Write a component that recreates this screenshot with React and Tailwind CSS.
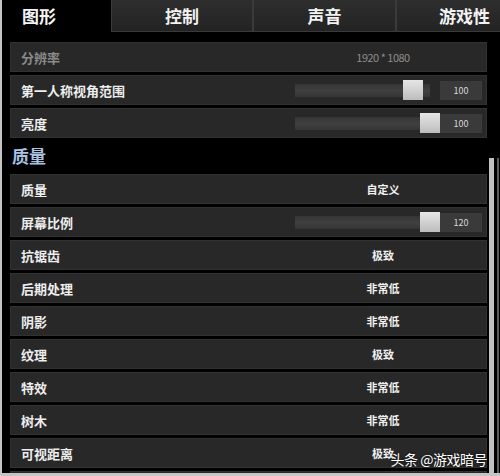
import React from "react";

const FONT = { fontFamily: '"Noto Sans CJK SC", "Noto Sans", sans-serif' };

function Tab({ label, className }) {
  return (
    <div
      className={`flex h-[32px] shrink-0 items-center justify-center border border-t-0 border-[#3a3a3a] bg-gradient-to-b from-[#2e2e2e] to-[#232323] text-[17px] font-bold text-[#f2f2f2] ${className}`}
    >
      {label}
    </div>
  );
}

function Row({ label, dim, children }) {
  return (
    <div className="flex h-[30px] w-[477px] shrink-0 items-center border border-[#323232] bg-[#282828]">
      <div
        className={`flex-1 pl-[10px] text-[13px] font-bold leading-none ${
          dim ? "text-[#8a8a8a]" : "text-[#ededed]"
        }`}
      >
        {label}
      </div>
      <div className="flex h-full w-[191px] items-center">{children}</div>
    </div>
  );
}

function TextValue({ children, dim }) {
  return (
    <div
      className={`w-[176px] text-center leading-none ${
        dim ? "text-[11px] font-normal tracking-[-0.5px] text-[#8c8c8c]" : "text-[11px] font-bold text-[#f0f0f0]"
      }`}
    >
      {children}
    </div>
  );
}

function Slider({ thumbClass, value }) {
  return (
    <>
      <div className="relative h-[13px] w-[135px] bg-gradient-to-b from-[#353535] via-[#404040] to-[#353535]">
        <div
          className={`absolute top-[-4px] h-[20px] w-[20px] bg-gradient-to-b from-[#e6e6e6] to-[#bdbdbd] ${thumbClass}`}
        />
      </div>
      <div className="ml-[10px] flex h-[19px] w-[42px] items-center justify-center bg-[#3a3a3a] text-[9px] leading-none text-[#d8d8d8]">
        {value}
      </div>
    </>
  );
}

export default function App() {
  return (
    <div
      style={FONT}
      className="relative flex h-[476px] w-[500px] flex-col overflow-hidden border-b-[3px] border-l-2 border-[#c4c4c4] bg-black"
    >
      <div className="flex h-[32px] shrink-0">
        <div className="flex h-[32px] w-[109px] shrink-0 items-center bg-black pl-[20px] text-[17px] font-bold text-[#f5f5f5]">
          图形
        </div>
        <Tab label="控制" className="w-[142px]" />
        <Tab label="声音" className="w-[143px]" />
        <Tab label="游戏性" className="w-[137px]" />
      </div>

      <div className="flex flex-1">
        <div className="flex flex-col gap-[3px] pl-[8px] pt-[10px]">
          <Row label="分辨率" dim>
            <TextValue dim>1920 * 1080</TextValue>
          </Row>
          <Row label="第一人称视角范围">
            <Slider thumbClass="left-[108px]" value="100" />
          </Row>
          <Row label="亮度">
            <Slider thumbClass="left-[125px]" value="100" />
          </Row>
          <div className="flex h-[30px] shrink-0 items-center pl-[2px] text-[17px] font-bold text-[#a9c2e2]">
            质量
          </div>
          <Row label="质量">
            <TextValue>自定义</TextValue>
          </Row>
          <Row label="屏幕比例">
            <Slider thumbClass="left-[125px]" value="120" />
          </Row>
          <Row label="抗锯齿">
            <TextValue>极致</TextValue>
          </Row>
          <Row label="后期处理">
            <TextValue>非常低</TextValue>
          </Row>
          <Row label="阴影">
            <TextValue>非常低</TextValue>
          </Row>
          <Row label="纹理">
            <TextValue>极致</TextValue>
          </Row>
          <Row label="特效">
            <TextValue>非常低</TextValue>
          </Row>
          <Row label="树木">
            <TextValue>非常低</TextValue>
          </Row>
          <Row label="可视距离">
            <TextValue>极致</TextValue>
          </Row>
          <Row label="" />
        </div>
        <div className="ml-[2px] mt-[126px] w-[5px] bg-[#c2c2c2]" />
        <div className="ml-[3px] mt-[126px] w-[2px] bg-[#5a5a5a]" />
      </div>

      <div className="absolute bottom-[7px] right-[13px] text-[14px] leading-none tracking-[-0.5px] text-white [text-shadow:0_0_3px_rgba(0,0,0,0.8)]">
        头条 @游戏暗号
      </div>
    </div>
  );
}
